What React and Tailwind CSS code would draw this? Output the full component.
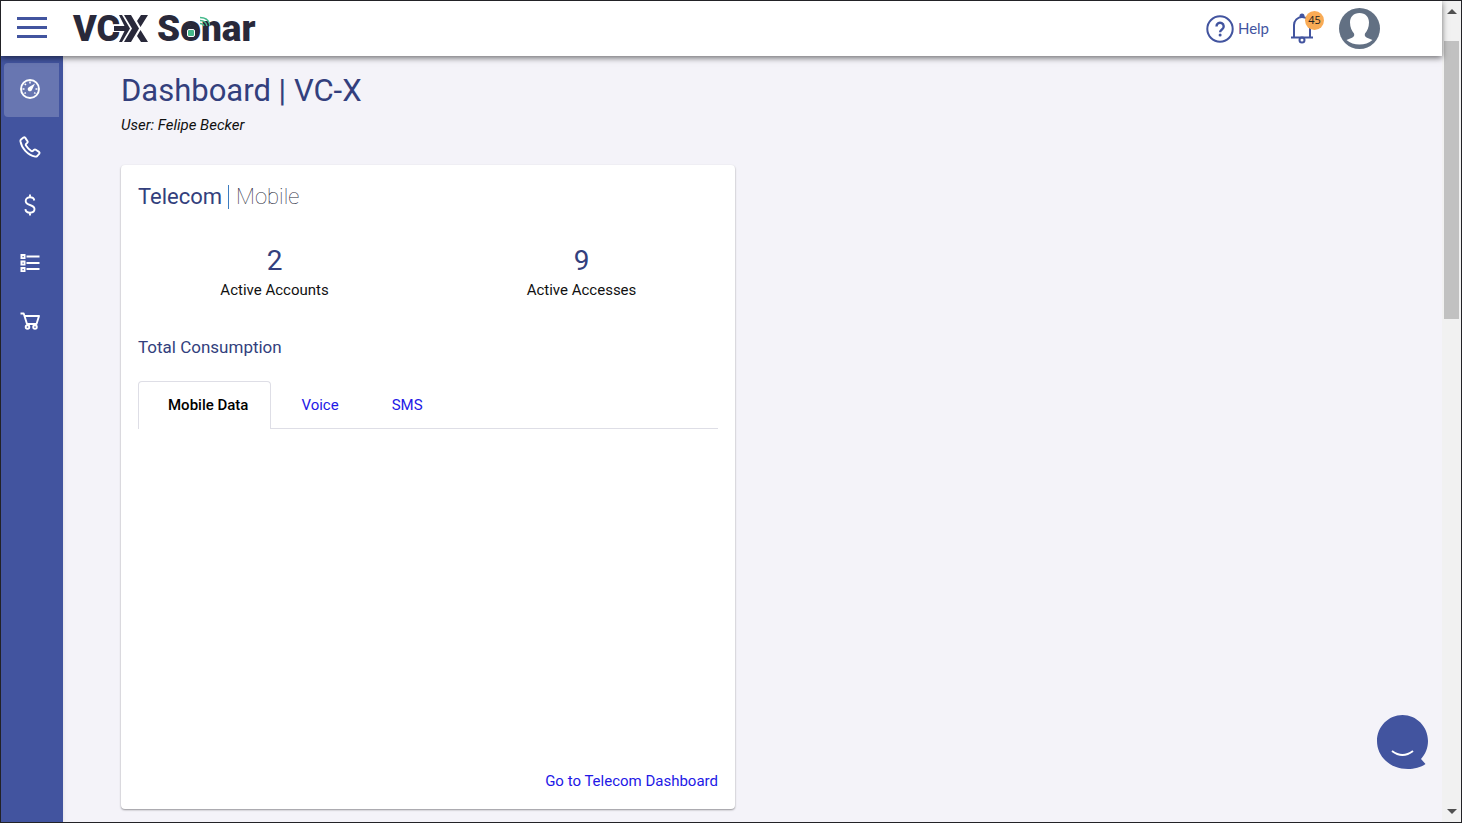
import React, { useState } from "react";

function Logo() {
  return (
    <a href="#home" aria-label="VC-X Sonar" className="relative flex items-center text-[36px] leading-10 font-black text-[#29293a]">
      <span className="w-[41px]">VC</span>
      <svg width="35" height="27" viewBox="0 0 35 27" fill="currentColor" aria-hidden="true">
        <path d="M0 9.500h11V17H0z" fill="#fff" />
        <path d="M5 0h3l8 13.500L8 27H5l5.500-11H0v-5h10.500z" />
        <path d="M10 0h7l8 13.500L17 27h-7l8-13.500z" />
        <path d="M27 0h7l-7.500 12-3.500-6zM27 27h7l-7.500-12-3.500 6z" />
      </svg>
      <span className="ml-2 text-[37px]">Sonar</span>
      <svg className="absolute left-[109px] top-0 h-10 w-7" viewBox="0 0 28 40" fill="none" aria-hidden="true">
        <rect x="4" y="17" width="10" height="14" rx="2" fill="#29293a" />
        <rect x="5.500" y="20.500" width="7" height="7" rx="1.500" fill="#45b98b" stroke="#fff" strokeWidth="1" />
        <path d="M18 14.500q3 0 4 2.500M18 11.500q6 0 7 5.500M18 8.500q9 0 10 8.500" stroke="#45b98b" strokeWidth="1.300" />
      </svg>
    </a>
  );
}

function Bell() {
  return (
    <svg width="26" height="31" viewBox="0 0 26 31" fill="none" stroke="#42549f" strokeWidth="2" aria-hidden="true">
      <path d="M5 24V12a8 8 0 0 1 16 0v12M2 24.500h22" />
      <path d="M10.500 4V3a2 2 0 0 1 5 0v1z" fill="#42549f" stroke="none" />
      <circle cx="13" cy="27" r="2.500" />
    </svg>
  );
}

function Avatar() {
  return (
    <svg width="41" height="41" viewBox="0 0 41 41" aria-hidden="true">
      <circle cx="20.500" cy="20.500" r="20.500" fill="#627083" />
      <path
        fill="#fff"
        d="M20.500 5c6 0 9.500 4 9.500 9.500 0 5-2 8.500-4 11-.8 2 .2 3.500 2 4.300l5.500 2.200C30 35 25.500 36.500 20.500 36.500S11 35 7.500 32l5.500-2.200c1.800-.8 2.800-2.300 2-4.300-2-2.500-4-6-4-11C11 9 14.500 5 20.500 5z"
      />
    </svg>
  );
}

const icons = {
  Dashboard: (
    <>
      <circle cx="11" cy="11" r="9" />
      <path d="M11 3.500v2M3.500 11h2M16.500 11h2M5.700 5.700l1.300 1.300M5.500 15.500l1.300-.9M16.500 15.500l-1.300-.9" strokeWidth="1.500" />
      <path d="M16 5.500l-3.200 6.700a2.200 2.200 0 1 1-3-3z" fill="#fff" stroke="none" />
    </>
  ),
  Calls: (
    <path d="M2 3.500L4.500 1.500q1-.6 1.800.4l2.200 3.300q.5 1-.3 1.700L7 8q-.5.700 0 1.500 2 3.300 5.300 5.500.8.500 1.500 0l1.300-1.200q.8-.7 1.700-.1l3.200 2.200q.9.800.3 1.700l-2 2.400q-.7.700-2 .6C8.500 19 2.500 12 1.400 5.200q-.1-1.100.6-1.700z" />
  ),
  Costs: (
    <path d="M15.300 6.500C15 4.500 13.200 3.300 11 3.300S6.700 4.700 6.700 7c0 2.500 2 3.300 4.300 4s4.500 1.700 4.500 4.100c0 2.300-2 3.700-4.500 3.700s-4.400-1.400-4.600-3.600M11 .5v3M11 18.500v3" />
  ),
  Inventory: (
    <>
      <path d="M7.500 4.500h13M7.500 11h13M7.500 17h13" />
      <path d="M1.500 2h5v5h-5zM1.500 8.500h5v5h-5zM1.500 15h5v5h-5z" fill="#fff" stroke="none" />
      <path d="M3.500 4h1.200v1.200H3.500zM3.500 10.500h1.200v1.200H3.500zM3.500 17h1.200v1.200H3.500z" fill="#42549f" stroke="none" />
    </>
  ),
  Orders: (
    <>
      <path d="M1.500 3.500h3.200L8 14h9.500L20 6H6" />
      <circle cx="8.500" cy="17" r="1.800" />
      <circle cx="16" cy="17" r="1.800" />
    </>
  ),
};

function Sidebar() {
  return (
    <nav aria-label="Main" className="flex w-[62px] shrink-0 flex-col gap-1 bg-[#42549f] px-[3px] pt-[7px] shadow-md">
      {Object.keys(icons).map((name, i) => (
        <a
          key={name}
          href={"#" + name.toLowerCase()}
          aria-label={name}
          className={"flex h-[54px] w-[55px] items-center justify-center rounded-l pr-[3px] pb-[2px] " + (i === 0 ? "bg-[#6876b1]" : "")}
        >
          <svg width="22" height="22" viewBox="0 0 22 22" fill="none" stroke="#fff" strokeWidth="1.900" strokeLinejoin="round" aria-hidden="true">
            {icons[name]}
          </svg>
        </a>
      ))}
    </nav>
  );
}

function Stat({ value, label }) {
  return (
    <div className="text-center">
      <p className="text-[28px] leading-8 text-[#333f7d]">{value}</p>
      <p className="mt-[3px] leading-5">{label}</p>
    </div>
  );
}

function TelecomCard() {
  const tabs = ["Mobile Data", "Voice", "SMS"];
  const [active, setActive] = useState(tabs[0]);
  return (
    <section className="flex min-h-[644px] flex-col rounded-sm bg-white pt-4 pb-[18px] shadow-[0_1px_2px_rgba(0,0,0,0.4)]">
      <h2 className="flex items-center px-[17px] text-[22px] leading-8 text-[#333f7d]">
        Telecom
        <span className="ml-[6px] mr-[7px] h-6 w-px bg-[#3c7cc0]" />
        <span className="font-thin text-[#29293a]">Mobile</span>
      </h2>
      <div className="mt-8 grid grid-cols-2">
        <Stat value="2" label="Active Accounts" />
        <Stat value="9" label="Active Accesses" />
      </div>
      <h3 className="mt-[35px] px-[17px] text-[17px] leading-6 text-[#333f7d]">Total Consumption</h3>
      <div role="tablist" className="mx-[17px] mt-[22px] flex border-b border-[#dedee6]">
        {tabs.map((tab) => (
          <button
            key={tab}
            role="tab"
            type="button"
            aria-selected={tab === active}
            onClick={() => setActive(tab)}
            className={
              "-mb-px h-12 border border-b-0 pr-[22px] pl-[29px] " +
              (tab === active
                ? "rounded-t-sm border-[#dedee6] bg-white font-medium text-black"
                : "border-transparent text-[#2318e6]")
            }
          >
            {tab}
          </button>
        ))}
      </div>
      <a href="#telecom" className="mt-auto self-end px-[17px] leading-5 text-[#2318e6]">
        Go to Telecom Dashboard
      </a>
    </section>
  );
}

function ScrollRail() {
  return (
    <div aria-hidden="true" className="flex w-[19px] shrink-0 flex-col items-center bg-[#f1f1f1] py-2">
      <svg width="10" height="5" viewBox="0 0 10 5" fill="#505050"><path d="M0 5L5 0l5 5z" /></svg>
      <div className="mt-[27px] h-[278px] w-[15px] bg-[#c1c1c1]" />
      <svg className="mt-auto" width="10" height="5" viewBox="0 0 10 5" fill="#505050"><path d="M0 0l5 5 5-5z" /></svg>
    </div>
  );
}

export default function App() {
  return (
    <div className="flex h-screen overflow-hidden border border-[#222226] bg-[#f4f3f9] font-['Roboto',sans-serif] text-[15px] text-[#111]">
      <div className="flex min-w-0 flex-1 flex-col">
        <header className="z-10 flex h-[55px] shrink-0 items-center bg-white pl-4 pr-[62px] shadow-[0_2px_6px_rgba(0,0,0,0.55)]">
          <button type="button" aria-label="Menu" className="mr-[26px] mb-[2px] flex w-[30px] flex-col gap-[6px]">
            <span className="h-[3px] w-full bg-[#42549f]" />
            <span className="h-[3px] w-full bg-[#42549f]" />
            <span className="h-[3px] w-full bg-[#42549f]" />
          </button>
          <Logo />
          <a href="#help" className="ml-auto flex items-center gap-1 font-['Lato',sans-serif] text-[15px] text-[#42549f]">
            <svg width="28" height="28" viewBox="0 0 28 28" fill="none" stroke="#42549f" strokeWidth="2" aria-hidden="true">
              <circle cx="14" cy="14" r="12.700" />
              <path d="M10.500 11.500a3.600 3.600 0 1 1 5.700 2.800c-1.300.9-2.100 1.500-2.100 3" strokeWidth="2.400" />
              <circle cx="14.100" cy="20" r="1.500" fill="#42549f" stroke="none" />
            </svg>
            Help
          </a>
          <button type="button" aria-label="Notifications, 45 new" className="relative ml-5">
            <Bell />
            <span className="absolute -top-[2px] left-4 flex size-[19px] items-center justify-center rounded-full bg-[#f9ab55] font-['Open_Sans',sans-serif] text-[11px] text-[#222]">
              45
            </span>
          </button>
          <button type="button" aria-label="Account" className="ml-6"><Avatar /></button>
        </header>
        <div className="flex min-h-0 flex-1">
          <Sidebar />
          <main className="min-w-0 flex-1 overflow-hidden pt-4 pr-[63px] pl-[58px]">
            <h1 className="text-[31px] leading-[38px] text-[#333f7d]">Dashboard | VC-X</h1>
            <p className="mt-[3px] leading-6 italic">User: Felipe Becker</p>
            <div className="mt-7 grid grid-cols-2 gap-[30px]">
              <TelecomCard />
            </div>
          </main>
        </div>
      </div>
      <ScrollRail />
      <button type="button" aria-label="Open chat" className="fixed right-[33px] bottom-[53px] z-20">
        <svg width="53" height="55" viewBox="0 0 53 55" aria-hidden="true">
          <path d="M26.500 0C40.500 0 52 11.500 52 26c0 7-2.500 13-7 18l4.500 5C45 52.500 38 54 32 54 14 54 1 41.500 1 26 1 11.500 12.500 0 26.500 0z" fill="#42549f" />
          <path d="M16 36q10.500 8 21 0" fill="none" stroke="#fff" strokeWidth="2" />
        </svg>
      </button>
    </div>
  );
}
